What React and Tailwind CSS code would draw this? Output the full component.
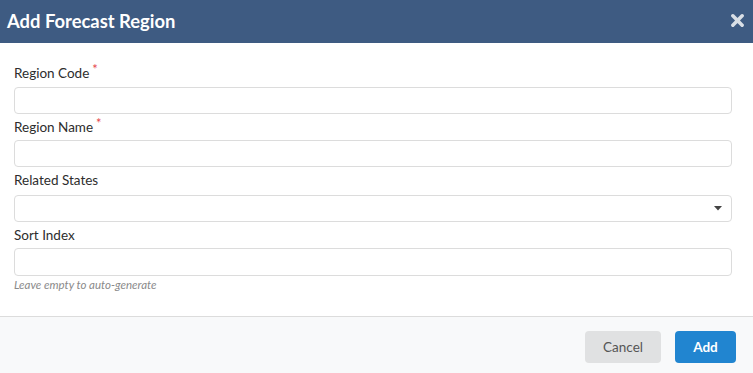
function Label({ children, req, className }) {
  return (
    <div className={"h-[16px] leading-[16px] text-[13.5px] text-[#2d2d2d] whitespace-nowrap " + className}>
      {children}
      {req && <span className="text-[#e5484d] text-[13px] ml-[3px] relative top-[-4px]">*</span>}
    </div>
  );
}

export default function App() {
  const font = { fontFamily: "Lato, 'Open Sans', sans-serif" };
  return (
    <div className="w-[753px] h-[373px] bg-white flex flex-col overflow-hidden" style={font}>
      <div className="h-[43px] bg-[#3e5b82] flex items-center justify-between pl-[7px] pr-[9px] shrink-0">
        <div className="text-white font-bold text-[18.4px] leading-none mt-[-1px]">Add Forecast Region</div>
        <svg width="13" height="13" viewBox="0 0 14 14" className="mt-[-2px]">
          <path d="M2 2 L12 12 M12 2 L2 12" stroke="#d9dfe6" strokeWidth="3.8" strokeLinecap="round" />
        </svg>
      </div>
      <div className="flex-1 pl-[14px] pr-[21px] pt-[22px] flex flex-col">
        <Label req>Region Code</Label>
        <div className="mt-[6px] h-[27px] border border-[#dcdcdc] rounded-[4px]" />
        <Label req className="mt-[5px]">Region Name</Label>
        <div className="mt-[5px] h-[27px] border border-[#dcdcdc] rounded-[4px]" />
        <Label className="mt-[5px]">Related States</Label>
        <div className="mt-[7px] h-[27px] border border-[#dcdcdc] rounded-[4px] flex items-center justify-end pr-[9px]">
          <svg width="8" height="5" viewBox="0 0 8 5"><path d="M0 0 L8 0 L4 4.5 Z" fill="#444" /></svg>
        </div>
        <Label className="mt-[5px]">Sort Index</Label>
        <div className="mt-[5px] h-[28px] border border-[#dcdcdc] rounded-[4px]" />
        <div className="mt-[2px] text-[11.5px] italic text-[#8a8a8a] leading-[14px]">Leave empty to auto-generate</div>
      </div>
      <div className="h-[57px] border-t border-[#dcdcdc] bg-[#f8f9fa] flex items-start justify-end gap-[14px] pr-[17px] pt-[14px] shrink-0">
        <div className="w-[76px] h-[32px] rounded-[4px] bg-[#e0e1e2] text-[#555] text-[13.5px] flex items-center justify-center">Cancel</div>
        <div className="w-[61px] h-[32px] rounded-[4px] bg-[#2185d0] text-white font-bold text-[13.5px] flex items-center justify-center">Add</div>
      </div>
    </div>
  );
}
